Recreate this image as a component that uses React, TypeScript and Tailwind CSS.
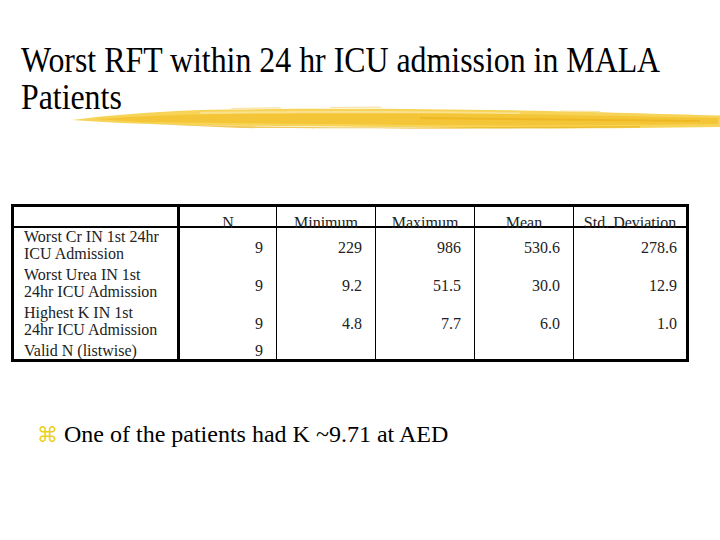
import React from 'react'

const serif = { fontFamily: '"Liberation Serif", "Times New Roman", serif' }

type Row = { label: string[]; n: string; min?: string; max?: string; mean?: string; sd?: string; h: string }

const rows: Row[] = [
  { label: ['Worst Cr IN 1st 24hr', 'ICU Admission'], n: '9', min: '229', max: '986', mean: '530.6', sd: '278.6', h: 'h-[38px]' },
  { label: ['Worst Urea IN 1st', '24hr ICU Admission'], n: '9', min: '9.2', max: '51.5', mean: '30.0', sd: '12.9', h: 'h-[38px]' },
  { label: ['Highest K IN 1st', '24hr ICU Admission'], n: '9', min: '4.8', max: '7.7', mean: '6.0', sd: '1.0', h: 'h-[38px]' },
  { label: ['Valid N (listwise)'], n: '9', h: 'h-[17px]' },
]

const cols = 'grid grid-cols-[163px_3px_96px_1px_98px_1px_98px_1px_98px_1px_112px]'

function BrushStroke() {
  return (
    <svg className="absolute left-0 top-[100px]" width="720" height="36" viewBox="0 0 720 36">
      <path
        d="M72 20 C110 15 150 12 200 10 C300 8 420 8.5 520 10.5 C600 12 660 14 720 15.5 L720 27 C640 28 560 29 470 28 C360 27 260 26 180 25 C140 24 100 22 72 20 Z"
        fill="#f7d458"
      />
      <path
        d="M95 19 C150 15 230 13 320 12.5 C420 12.5 520 14 620 16 L718 18 L718 24 C620 25 520 26 420 25 C320 24 220 23 140 22 Z"
        fill="#f2c02a"
        opacity="0.7"
      />
      <path d="M200 12 C300 10.5 420 10.5 520 12.5 L520 14 C420 13 300 13 200 14 Z" fill="#fae39a" opacity="0.8" />
      <path d="M150 24 C260 27 380 28 500 27 L640 26 L640 27.5 C500 29 360 29 240 28 Z" fill="#eab41e" opacity="0.7" />
      <path d="M420 17 C500 18 600 19 700 20 L700 22 C600 21 500 20 420 19 Z" fill="#e8ad14" opacity="0.55" />
      <path
        d="M230 8 L280 7.2 L282 8.5 L232 9 Z M330 7 L380 6.6 L382 7.8 L330 8 Z M560 10.5 L600 11 L600 12 L560 11.5 Z"
        fill="#f3cf66"
        opacity="0.6"
      />
    </svg>
  )
}

export default function App() {
  return (
    <div className="relative w-[720px] h-[540px] bg-white overflow-hidden text-black" style={serif}>
      <h1 className="pt-[42px] pl-[23px] text-[35px] leading-[37px] font-normal whitespace-nowrap origin-left scale-x-[0.91]">
        Worst RFT within 24 hr ICU admission in MALA
        <br />
        Patients
      </h1>
      <BrushStroke />

      <div className="mt-[88px] ml-[11px] w-[678px] border-[3px] border-black text-[16px] text-[#222]">
        <div className={`${cols} h-[21px] border-b-2 border-black`}>
          <div />
          <div className="bg-black" />
          {['N', 'Minimum', 'Maximum', 'Mean', 'Std. Deviation'].map((h, i) => (
            <React.Fragment key={h}>
              {i > 0 && <div className="bg-black" />}
              <div className="pt-[7px] leading-[18px] text-center whitespace-nowrap">{h}</div>
            </React.Fragment>
          ))}
        </div>
        {rows.map((r) => (
          <div key={r.label[0]} className={`${cols} ${r.h}`}>
            <div className="pl-[10px] leading-[17px] whitespace-nowrap">
              {r.label.map((l) => (
                <div key={l}>{l}</div>
              ))}
            </div>
            <div className="bg-black" />
            {[r.n, r.min, r.max, r.mean, r.sd].map((v, i) => (
              <React.Fragment key={i}>
                {i > 0 && <div className="bg-black" />}
                <div className={`flex items-center justify-end leading-[17px] ${i === 4 ? 'pr-[9px]' : 'pr-[13px]'}`}>
                  {v ?? ''}
                </div>
              </React.Fragment>
            ))}
          </div>
        ))}
      </div>

      <div className="mt-[58px] ml-[37px] flex items-baseline gap-[6px]">
        <span className="text-[21px] leading-[28px] text-[#ecd020]" style={{ fontFamily: '"DejaVu Sans", sans-serif' }}>
          ⌘
        </span>
        <span className="text-[24px] leading-[28px]">One of the patients had K ~9.71 at AED</span>
      </div>
    </div>
  )
}
